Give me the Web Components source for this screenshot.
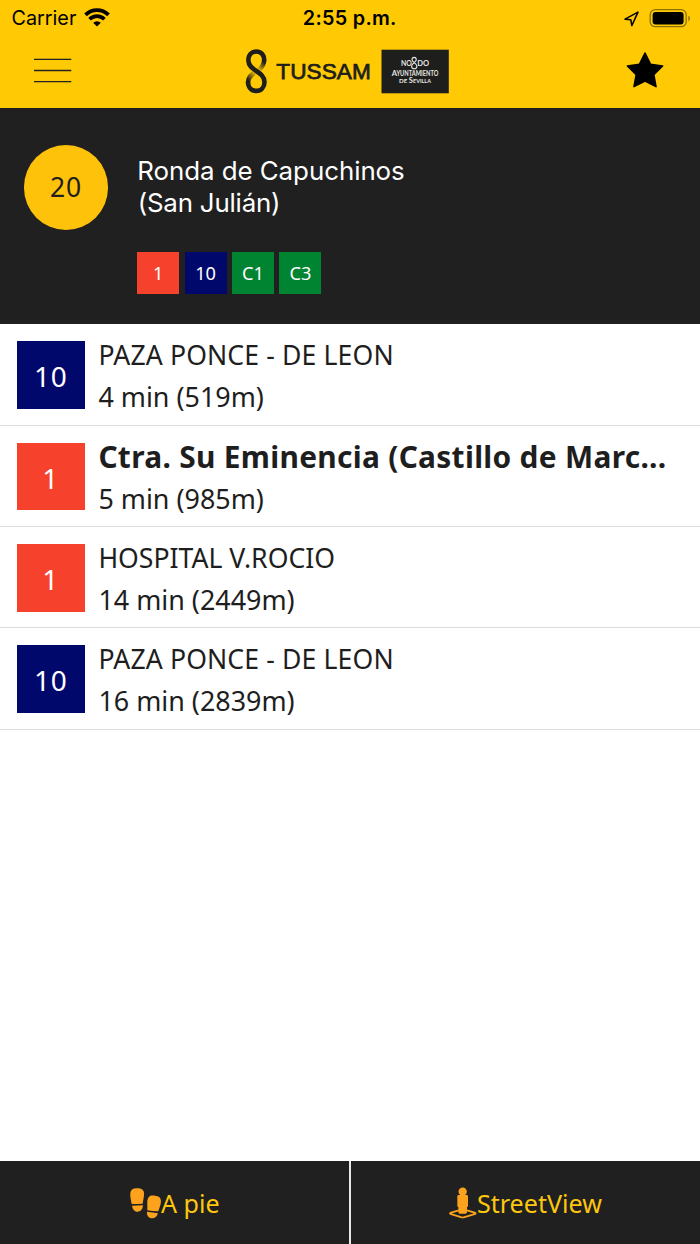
<!DOCTYPE html>
<html lang="es">
<head>
<meta charset="utf-8">
<title>TUSSAM</title>
<style>
    body {
        margin: 0;
        background: #fff;
        font-family: 'Noto Sans', 'Open Sans', sans-serif;
    }
</style>
</head>
<body>
<tussam-app>
    <status-bar slot="top" carrier="Carrier" time="2:55 p.m."></status-bar>
    <nav-bar slot="top"></nav-bar>

    <stop-header slot="top" number="20">
        <span slot="name">Ronda de Capuchinos</span>
        <span slot="detail">(San Julián)</span>
        <line-badge slot="lines" line="1"></line-badge>
        <line-badge slot="lines" line="10"></line-badge>
        <line-badge slot="lines" line="C1"></line-badge>
        <line-badge slot="lines" line="C3"></line-badge>
    </stop-header>

    <arrival-row line="10" style="--title-spacing: 0.13px">
        <span slot="title">PAZA PONCE - DE LEON</span>
        <span slot="time">4 min (519m)</span>
    </arrival-row>
    <arrival-row line="1" next>
        <span slot="title">Ctra. Su Eminencia (Castillo de Marc...</span>
        <span slot="time">5 min (985m)</span>
    </arrival-row>
    <arrival-row line="1">
        <span slot="title">HOSPITAL V.ROCIO</span>
        <span slot="time">14 min (2449m)</span>
    </arrival-row>
    <arrival-row line="10" style="--title-spacing: 0.13px">
        <span slot="title">PAZA PONCE - DE LEON</span>
        <span slot="time">16 min (2839m)</span>
    </arrival-row>

    <tab-button slot="bottom" icon="feet">A pie</tab-button>
    <tab-button slot="bottom" icon="street">StreetView</tab-button>
</tussam-app>

<script>
const lineColors = {
    '1': '#f6412c',
    '10': '#00086c',
    'C1': '#008431',
    'C3': '#008431'
}

const icons = {
    feet: `
        <svg width="31.3" height="31" viewBox="0 0 94 93" fill="#fda21d">
            <path d="M5 48 C3 36 0 27 1 16 C2 5 10 1 21 1 C33 1 41 5 42 14 C43 26 39 37 38 47 L22 48 Z"/>
            <path d="M6 53 L39 52 C38 64 32 71 22 71 C13 71 8 64 6 53 Z"/>
            <path d="M52 67 C53 53 50 40 54 31 C58 22 66 22 75 23 C87 24 93 29 93 39 C93 50 88 60 85 70 L68 69 Z"/>
            <path d="M51 71 L84 76 C81 86 75 91 66 91 C56 90 50 83 51 71 Z"/>
        </svg>`,
    street: `
        <svg width="28" height="32" viewBox="0 0 84 96" fill="#fda21d">
            <path d="M29 70 L4 77.5 Q2 79 4 80.5 L38 91 Q41 92 44 91 L79 80.5 Q81 79 79 77.5 L54 70" fill="none" stroke="#fda21d" stroke-width="5" stroke-linejoin="round"/>
            <circle cx="41" cy="14" r="12.5"/>
            <path d="M29 24 H53 Q57 24 57 28 V56 Q57 60 54 60 V75 Q54 80 49 80 H33 Q28 80 28 75 V60 Q25 60 25 56 V28 Q25 24 29 24 Z"/>
        </svg>`
}

class BaseElement extends HTMLElement {
    constructor() {
        super();
        this.attachShadow({ mode: 'open' });
        this.shadowRoot.innerHTML = this.render();
    }
}

class TussamApp extends BaseElement {
    render() {
        return `
            <style>
                :host {
                    display: flex;
                    flex-direction: column;
                    height: 1244px;
                    overflow: hidden;
                }

                main {
                    flex: 1;
                    min-height: 0;
                    background: #fff;
                }

                footer {
                    display: grid;
                    grid-template-columns: 1fr 1fr;
                    gap: 1.5px;
                    height: 83px;
                    background: #e8e8e8;
                }
            </style>
            <header><slot name="top"></slot></header>
            <main><slot></slot></main>
            <footer><slot name="bottom"></slot></footer>
        `;
    }
}

class StatusBar extends BaseElement {
    render() {
        return `
            <style>
                :host {
                    display: grid;
                    grid-template-columns: 1fr auto 1fr;
                    align-items: center;
                    height: 35px;
                    padding: 0 10px 0 11.5px;
                    box-sizing: border-box;
                    background: #ffca03;
                    color: #000;
                    font: 19.8px/37px Inter, sans-serif;
                }

                .left, .right {
                    display: flex;
                    align-items: center;
                }

                .left { gap: 7.5px; }
                .left svg { margin-top: -2px; }

                .time {
                    font-weight: 600;
                    letter-spacing: 0.3px;
                    margin-left: -2px;
                }

                .right {
                    justify-content: flex-end;
                    gap: 9px;
                }
            </style>
            <div class="left">
                <span>${this.getAttribute('carrier')}</span>
                <svg width="26" height="19" viewBox="0 0 26 19" fill="none" stroke="#000" stroke-width="3.7">
                    <path d="M1.5 6.9 A16.2 16.2 0 0 1 24.5 6.9"/>
                    <path d="M5.6 11.3 A10.4 10.4 0 0 1 20.4 11.3"/>
                    <path d="M13 18.6 L9.2 14.8 A5.3 5.3 0 0 1 16.8 14.8 Z" fill="#000" stroke="none"/>
                </svg>
            </div>
            <div class="time">${this.getAttribute('time')}</div>
            <div class="right">
                <svg width="16" height="16" viewBox="0 0 16 16" fill="none" stroke="#000" stroke-width="1.5" stroke-linejoin="round">
                    <path d="M15 1.1 L2 8.2 L7.8 8.7 L8.8 14.6 Z"/>
                </svg>
                <svg width="42" height="20" viewBox="0 0 42 20">
                    <rect x="2.2" y="0.7" width="36" height="17" rx="5" fill="none" stroke="#8d7208" stroke-width="1.3"/>
                    <rect x="4.6" y="3" width="31" height="12.4" rx="3"/>
                    <path d="M40.3 6.4 Q42 7.5 42 9.4 Q42 11.4 40.3 12.3 Z" fill="#8d7208"/>
                </svg>
            </div>
        `;
    }
}

class NavBar extends BaseElement {
    render() {
        return `
            <style>
                :host {
                    display: flex;
                    justify-content: space-between;
                    height: 73.3px;
                    padding: 14px 36px 0 34px;
                    box-sizing: border-box;
                    background: #ffca03;
                }

                svg { display: block; }
                .menu { margin-top: 9px; }
                .logo { margin-left: -2px; }
                .star { margin-top: 2px; }
            </style>
            <svg class="menu" width="38" height="25" viewBox="0 0 38 25" stroke="#222" stroke-width="1.4">
                <path d="M0 1.4 H37.3 M0 12.5 H37.3 M0 23.6 H37.3"/>
            </svg>
            <svg class="logo" width="205" height="46" viewBox="0 0 205 46">
                <defs>
                    <linearGradient id="fadeTop" gradientUnits="userSpaceOnUse" x1="20" y1="14" x2="13" y2="22">
                        <stop offset="0" stop-color="#1e1e1c"/>
                        <stop offset="1" stop-color="#ffca03"/>
                    </linearGradient>
                    <linearGradient id="fadeBottom" gradientUnits="userSpaceOnUse" x1="3" y1="31" x2="11" y2="23">
                        <stop offset="0" stop-color="#1e1e1c"/>
                        <stop offset="1" stop-color="#ffca03"/>
                    </linearGradient>
                </defs>
                <g fill="none" stroke-width="4.6">
                    <path d="M19.2 11 C19 15.5 17 18.5 13.5 21.5" stroke="url(#fadeTop)"/>
                    <path d="M3 33.5 C3 28.5 6 26 10 23" stroke="url(#fadeBottom)"/>
                    <path d="M19.2 11.6 C19.2 5.8 16 2.5 11.2 2.5 C6.8 2.5 3.4 5.8 3.4 11.4 C3.4 22 19.5 22 19.5 33 C19.5 38.2 16.2 41.9 11.3 41.9 C6.4 41.9 3 38.2 3 32.8" stroke="#1e1e1c"/>
                </g>
                <text x="31.3" y="29.8" font-family="Liberation Sans, sans-serif" font-size="22.6" fill="#1e1e1c" stroke="#1e1e1c" stroke-width="0.75" textLength="94.5">TUSSAM</text>
                <rect x="136.5" y="0.7" width="67.3" height="43.6" fill="#1e1e1c"/>
                <g font-family="Lato, sans-serif" font-weight="700" fill="#e6e6e4">
                    <text x="156" y="17.4" font-size="7.9" textLength="10.8" lengthAdjust="spacingAndGlyphs">NO</text>
                    <text x="172.2" y="17.4" font-size="7.9" textLength="11.8" lengthAdjust="spacingAndGlyphs">DO</text>
                    <text x="146.7" y="27" font-size="7.6">A</text>
                    <text x="151.4" y="27" font-size="6.6" textLength="42" lengthAdjust="spacingAndGlyphs">YUNTAMIENTO</text>
                    <text x="154.1" y="34" font-size="6.2">DE</text>
                    <text x="163.7" y="34" font-size="7.6">S</text>
                    <text x="168" y="34" font-size="6.4" textLength="18" lengthAdjust="spacingAndGlyphs">EVILLA</text>
                </g>
                <path d="M171.3 10.8 C171.3 7.6 167 7.6 167 10.8 C167 13.4 171.9 14.2 171.9 17.2 C171.9 20.6 166.6 20.6 166.6 17.2 C166.6 14.2 171.3 13.4 171.3 10.8 Z" fill="none" stroke="#e6e6e4" stroke-width="1.1"/>
            </svg>
            <svg class="star" width="39" height="39" viewBox="0 0 39 39" stroke="#000" stroke-width="1.6" stroke-linejoin="round">
                <path d="M20 2 L25.6 13.4 L37.6 15 L28.8 23.6 L31 35.6 L20 30 L9 35.6 L11.2 23.6 L2.4 15 L14.4 13.4 Z"/>
            </svg>
        `;
    }
}

class StopHeader extends BaseElement {
    render() {
        return `
            <style>
                :host {
                    display: flex;
                    gap: 29px;
                    height: 216.2px;
                    padding: 37.2px 24px 0 23.8px;
                    box-sizing: border-box;
                    background: #202020;
                    color: #fff;
                }

                .number {
                    width: 84.4px;
                    height: 84.4px;
                    border-radius: 50%;
                    background: #ffc20a;
                    color: #202020;
                    font-size: 26.5px;
                    line-height: 85px;
                    letter-spacing: 0.9px;
                    text-align: center;
                }

                .name {
                    padding-top: 10px;
                    font: 25.9px/32px Inter, sans-serif;
                }

                ::slotted(span) { display: block; }
                ::slotted([slot="name"]) { letter-spacing: -0.05px; }
                ::slotted([slot="detail"]) {
                    letter-spacing: -0.2px;
                    padding-left: 0.5px;
                }

                .lines {
                    display: flex;
                    gap: 5.3px;
                    margin-top: 32.4px;
                }
            </style>
            <div class="number">${this.getAttribute('number')}</div>
            <div>
                <div class="name">
                    <slot name="name"></slot>
                    <slot name="detail"></slot>
                </div>
                <div class="lines"><slot name="lines"></slot></div>
            </div>
        `;
    }
}

class LineBadge extends BaseElement {
    render() {
        const line = this.getAttribute('line');

        return `
            <style>
                :host {
                    display: block;
                    flex: none;
                    width: var(--badge-size, 42.1px);
                    height: var(--badge-size, 42.1px);
                    background: ${lineColors[line]};
                    color: #fff;
                    font-size: var(--badge-font, 18.2px);
                    line-height: var(--badge-line, 42px);
                    letter-spacing: var(--badge-spacing, 0);
                    text-align: center;
                }
            </style>
            ${line}
        `;
    }
}

class ArrivalRow extends BaseElement {
    render() {
        return `
            <style>
                :host {
                    display: flex;
                    gap: 13.8px;
                    height: 101.3px;
                    padding: 0 17px;
                    box-sizing: border-box;
                    border-bottom: 1px solid #dcdcdc;
                    color: #1e1e1e;
                    white-space: nowrap;
                }

                line-badge {
                    --badge-size: 67.6px;
                    --badge-font: 28px;
                    --badge-line: 71px;
                    --badge-spacing: 0.9px;
                    margin-top: 17px;
                }

                .text {
                    padding-top: 9.5px;
                    line-height: 42.3px;
                }

                .title {
                    font-size: 26.6px;
                    letter-spacing: var(--title-spacing, 0);
                }

                :host([next]) .title {
                    font-size: 29.87px;
                    font-weight: 700;
                    letter-spacing: 0.31px;
                    height: 42.3px;
                    line-height: 43.5px;
                }

                .time { font-size: 26.9px; }
                ::slotted(span) { display: block; }
            </style>
            <line-badge line="${this.getAttribute('line')}"></line-badge>
            <div class="text">
                <div class="title"><slot name="title"></slot></div>
                <div class="time"><slot name="time"></slot></div>
            </div>
        `;
    }
}

class TabButton extends BaseElement {
    render() {
        return `
            <style>
                :host {
                    display: flex;
                    align-items: center;
                    justify-content: center;
                    background: #202020;
                    color: #fdc70f;
                    font-size: 25.1px;
                    line-height: 84px;
                }
            </style>
            ${icons[this.getAttribute('icon')]}
            <span><slot></slot></span>
        `;
    }
}

const elements = [
    { name: 'tussam-app', ctor: TussamApp },
    { name: 'status-bar', ctor: StatusBar },
    { name: 'nav-bar', ctor: NavBar },
    { name: 'stop-header', ctor: StopHeader },
    { name: 'line-badge', ctor: LineBadge },
    { name: 'arrival-row', ctor: ArrivalRow },
    { name: 'tab-button', ctor: TabButton }
]

elements.forEach(item => {
    window.customElements.define(item.name, item.ctor)
})
</script>
</body>
</html>
